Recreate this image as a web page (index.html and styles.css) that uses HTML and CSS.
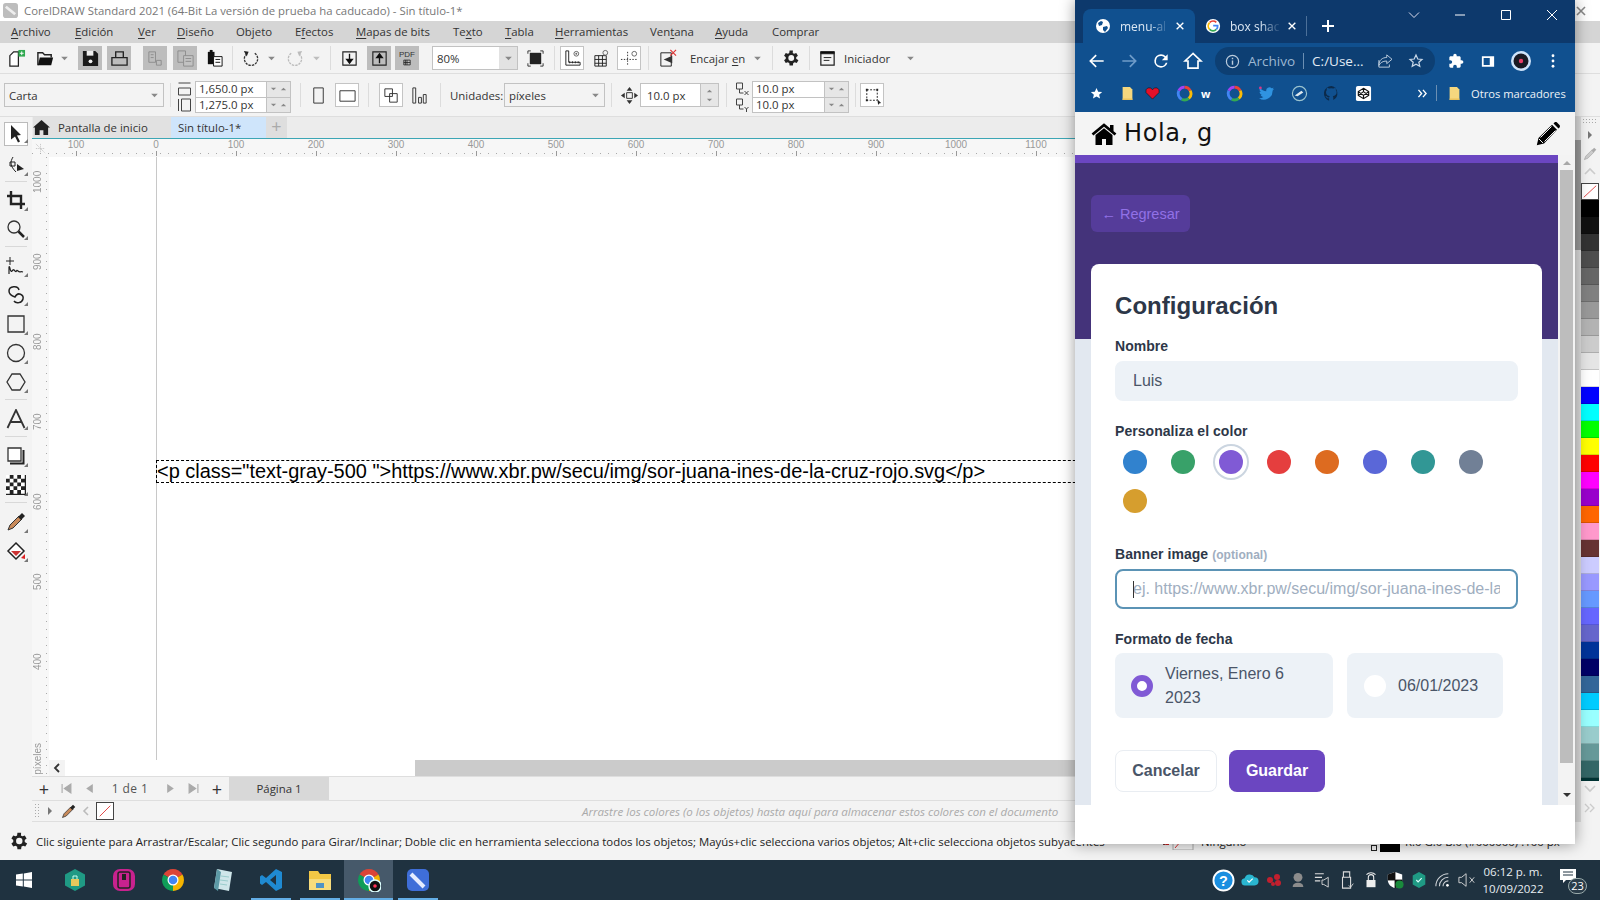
FILE: index.html
```html
<!DOCTYPE html>
<html lang="es">
<head>
<meta charset="utf-8">
<title>CorelDRAW y Chrome</title>
<link rel="stylesheet" href="styles.css">
</head>
<body>
<svg class="defs" aria-hidden="true">
  <symbol id="caret" viewBox="0 0 10 6"><path d="M1 1h8L5 5z" fill="#888"/></symbol>
  <symbol id="upp" viewBox="0 0 10 6"><path d="M1 5h8L5 1z" fill="#888"/></symbol>
  <symbol id="gear" viewBox="0 0 24 24"><path fill="#222" d="M19.4 13c.1-.3.1-.7.1-1s0-.7-.1-1l2.100-1.600-2-3.500-2.500 1c-.5-.4-1.100-.7-1.700-1L15.500 3h-4l-.4 2.900c-.6.3-1.200.6-1.700 1l-2.500-1-2 3.500L7 11c-.1.3-.1.700-.1 1s0 .7.1 1l-2.100 1.600 2 3.500 2.500-1c.5.4 1.100.7 1.700 1l.4 2.900h4l.4-2.900c.6-.3 1.200-.6 1.700-1l2.500 1 2-3.500zM13.500 15.500a3.500 3.500 0 1 1 0-7 3.500 3.500 0 0 1 0 7z" transform="translate(-1.200 0)"/></symbol>
  <symbol id="chrome" viewBox="0 0 24 24"><path fill="#db4437" d="M12 12 2.500 6.500A11 11 0 0 1 21.500 6.500z"/><path fill="#f4b400" d="M12 12 21.500 6.500A11 11 0 0 1 12 23z"/><path fill="#0f9d58" d="M12 12 12 23A11 11 0 0 1 2.500 6.500z"/><circle cx="12" cy="12" r="5.500" fill="#fff"/><circle cx="12" cy="12" r="4.300" fill="#4285f4"/></symbol>
  <symbol id="star" viewBox="0 0 24 24"><path d="M12 3l2.700 6 6.300.6-4.800 4.200 1.500 6.200L12 16.800 6.300 20l1.500-6.200L3 9.600 9.300 9z"/></symbol>
  <symbol id="folderY" viewBox="0 0 16 18"><path fill="#f5d77e" d="M2 1h9l3 3v13H2z"/><path fill="#e9c25d" d="M2 15h12v2H2z"/></symbol>
  <symbol id="ring" viewBox="0 0 24 24"><g fill="none" stroke-width="4"><path stroke="#ea4335" d="M12 3a9 9 0 0 1 8 5"/><path stroke="#fbbc05" d="M20 8a9 9 0 0 1-2 11"/><path stroke="#34a853" d="M18 19a9 9 0 0 1-10 1"/><path stroke="#4285f4" d="M8 20a9 9 0 0 1-4-12"/><path stroke="#a142f4" d="M4 8a9 9 0 0 1 8-5"/></g></symbol>
  <symbol id="x" viewBox="0 0 12 12"><path d="M2 2l8 8M10 2l-8 8" fill="none" stroke="currentColor" stroke-width="1.600"/></symbol>
</svg>

<div class="corel">
  <header class="titlebar">
    <svg class="app-logo" viewBox="0 0 16 16"><rect width="16" height="16" rx="3" fill="#bdbdbd"/><path d="M3 4l10 8" stroke="#eee" stroke-width="3"/></svg>
    <span class="title-text">CorelDRAW Standard 2021 (64-Bit La versión de prueba ha caducado) - Sin título-1*</span>
    <svg class="corel-close" viewBox="0 0 12 12"><use href="#x"/></svg>
  </header>
  <nav class="menubar">
    <span><u>A</u>rchivo</span><span><u>E</u>dición</span><span><u>V</u>er</span><span><u>D</u>iseño</span><span>Ob<u>j</u>eto</span><span>E<u>f</u>ectos</span><span><u>M</u>apas de bits</span><span>Te<u>x</u>to</span><span><u>T</u>abla</span><span><u>H</u>erramientas</span><span>Ven<u>t</u>ana</span><span><u>A</u>yuda</span><span>Comprar</span>
  </nav>

  <div class="toolbar tb1">
    <div class="c"><svg viewBox="0 0 20 20" class="i"><path d="M3 18V7l4-4h5v15z" fill="#fff" stroke="#222" stroke-width="1.300"/><path fill="#2fa84f" d="M12 1h7v7h-7z"/><path d="M15.500 2.500v4M13.500 4.500h4" stroke="#fff"/></svg></div>
    <div class="c ml5"><svg viewBox="0 0 20 20" class="i"><path d="M2 17V4h5l2 2h7v3" fill="none" stroke="#222" stroke-width="1.500"/><path d="M2 17l2-8h14l-2 8z" fill="#111"/></svg></div>
    <div class="c14"><svg class="cr"><use href="#caret"/></svg></div>
    <div class="c on ml7"><svg viewBox="0 0 20 20" class="i"><path d="M2 2h13l3 3v13H2z" fill="#1a1a1a"/><path d="M6 2h7v5H6z" fill="#eee"/><circle cx="10" cy="13" r="2" fill="#eee"/></svg></div>
    <div class="c on ml5"><svg viewBox="0 0 20 20" class="i"><path d="M6 9V3h8v6M2 17v-8h16v8z" fill="none" stroke="#222" stroke-width="1.400"/></svg></div>
    <div class="c on ml12"><svg viewBox="0 0 20 20" class="i"><path d="M3 3h7v11H3zM11 12h5v5h-5z" fill="none" stroke="#8d8d8d"/><path d="M5 6h3M5 9h3" stroke="#8d8d8d"/></svg></div>
    <div class="c on ml6"><svg viewBox="0 0 20 20" class="i"><path d="M2 2h8v12H2z" fill="none" stroke="#8d8d8d"/><path d="M8 7h10v11H8z" fill="#c2c2c2" stroke="#8d8d8d"/><path d="M10 10h6M10 13h6" stroke="#8d8d8d"/></svg></div>
    <div class="c ml5"><svg viewBox="0 0 20 20" class="i"><path d="M3 3h7v13H3z" fill="#111"/><path d="M5 1h3v3H5z" fill="#111"/><path d="M9 8h9v10H9z" fill="#fff" stroke="#111"/><path d="M11 11h5M11 14h5" stroke="#111"/></svg></div>
    <div class="sep ml6"></div>
    <div class="c ml5"><svg viewBox="0 0 20 20" class="i"><path d="M14.500 4.500A7 7 0 1 1 5 6" fill="none" stroke="#333" stroke-width="1.400" stroke-dasharray="2.500 1"/><path d="M3 2l5 1-2 5z" fill="#222"/></svg></div>
    <div class="c14 ml2"><svg class="cr"><use href="#caret"/></svg></div>
    <div class="c ml5"><svg viewBox="0 0 20 20" class="i"><path d="M5.500 4.500A7 7 0 1 0 15 6" fill="none" stroke="#bbb" stroke-width="1.400" stroke-dasharray="2.500 1"/><path d="M17 2l-5 1 2 5z" fill="#bbb"/></svg></div>
    <div class="c14 ml2 dim"><svg class="cr"><use href="#caret"/></svg></div>
    <div class="sep ml7"></div>
    <div class="c ml6"><svg viewBox="0 0 20 20" class="i"><path d="M3 3h14v14H3z" fill="none" stroke="#222" stroke-width="1.200"/><path d="M10 5v9M7 11l3 4 3-4z" stroke="#111" stroke-width="1.400"/></svg></div>
    <div class="c on ml6"><svg viewBox="0 0 20 20" class="i"><path d="M3 3h14v14H3z" fill="none" stroke="#222" stroke-width="1.200"/><path d="M10 15V6M7 9l3-4 3 4z" stroke="#111" stroke-width="1.400"/></svg></div>
    <div class="c on ml4 pdf">PDF<svg viewBox="0 0 10 8" class="pdfi"><path d="M1 1h8v6H1zM3 1v6M1 4h8M5 1v6" fill="none" stroke="#222"/></svg></div>
    <div class="combo zoom ml13"><span>80%</span><b><svg class="cr"><use href="#caret"/></svg></b></div>
    <div class="c ml5"><svg viewBox="0 0 20 20" class="i"><path d="M4 4h12v12H4z" fill="#222"/><path d="M2 5V2h3M15 2h3v3M18 15v3h-3M5 18H2v-3" fill="none" stroke="#333"/></svg></div>
    <div class="sep ml7"></div>
    <div class="c out ml5"><svg viewBox="0 0 20 20" class="i"><path d="M3 2h3v12h12v3H3z" fill="none" stroke="#222"/><path d="M7 15V13M10 15v-2M13 15v-2M16 15v-2" stroke="#222"/><circle cx="14" cy="5" r="2.500" fill="none" stroke="#666"/><circle cx="14" cy="5" r="1" fill="#666"/></svg></div>
    <div class="c ml5"><svg viewBox="0 0 20 20" class="i"><path d="M3 7h12v11H3zM7 7v11M11 7v11M3 11h12M3 15h12" fill="none" stroke="#222"/><circle cx="14" cy="4" r="2.500" fill="none" stroke="#666"/></svg></div>
    <div class="c out ml4"><svg viewBox="0 0 20 20" class="i"><path d="M8 3v15M1 11h17" fill="none" stroke="#333" stroke-dasharray="1.500 1.500"/><circle cx="15" cy="5" r="2.500" fill="none" stroke="#666"/></svg></div>
    <div class="sep ml7"></div>
    <div class="c ml6"><svg viewBox="0 0 20 20" class="i"><path d="M3 4h11v14H3z" fill="none" stroke="#222"/><path d="M6 11l9-4v8z" fill="#333"/><path d="M13 1l6 6M19 1l-6 6" stroke="#d33" stroke-width="1.200"/></svg></div>
    <span class="lbl w54 ml11">Encajar <u>e</u>n</span>
    <div class="c14 ml6"><svg class="cr"><use href="#caret"/></svg></div>
    <div class="sep ml8"></div>
    <div class="c ml6"><svg viewBox="0 0 24 24" class="i20"><use href="#gear"/></svg></div>
    <div class="sep ml6"></div>
    <div class="c w20 ml7"><svg viewBox="0 0 20 20" class="i"><path d="M3 3h14v14H3z" fill="none" stroke="#222" stroke-width="1.300"/><path d="M3 3h14v2H3zM6 9h8M6 12h6" stroke="#222"/></svg></div>
    <span class="lbl w46 ml7">Iniciador</span>
    <div class="c14 ml13"><svg class="cr"><use href="#caret"/></svg></div>
  </div>

  <div class="toolbar tb2">
    <div class="combo carta"><span>Carta</span><b><svg class="cr"><use href="#caret"/></svg></b></div>
    <div class="sep ml6"></div>
    <div class="stack-icons ml6">
      <svg viewBox="0 0 14 14"><path d="M1 1h12M1 6h12v7H1z" fill="none" stroke="#444"/></svg>
      <svg viewBox="0 0 14 14"><path d="M1 1v12M4 1h9v12H4z" fill="none" stroke="#444"/></svg>
    </div>
    <div class="fields ml2 w96">
      <div class="field"><span>1,650.0 px</span><b><svg class="cr"><use href="#caret"/></svg><svg class="cr"><use href="#upp"/></svg></b></div>
      <div class="field"><span>1,275.0 px</span><b><svg class="cr"><use href="#caret"/></svg><svg class="cr"><use href="#upp"/></svg></b></div>
    </div>
    <div class="sep ml9"></div>
    <div class="c ml5"><svg viewBox="0 0 20 20" class="i"><path d="M5 2h10v16H5z" fill="none" stroke="#333"/></svg></div>
    <div class="c out ml5"><svg viewBox="0 0 20 20" class="i"><path d="M2 5h16v11H2z" fill="none" stroke="#333"/></svg></div>
    <div class="sep ml9"></div>
    <div class="c out ml10"><svg viewBox="0 0 20 20" class="i"><path d="M3 3h8v8H3zM8 8h8v9H8z" fill="none" stroke="#333"/></svg></div>
    <div class="c ml4"><svg viewBox="0 0 20 20" class="i"><path d="M3 2h3v16H3zM9 12h3v6H9zM14 9h3v9h-3z" fill="none" stroke="#333"/></svg></div>
    <div class="sep ml9"></div>
    <span class="lbl w51 ml9">Unidades:</span>
    <div class="combo units ml3"><span>píxeles</span><b><svg class="cr"><use href="#caret"/></svg></b></div>
    <div class="sep ml6"></div>
    <div class="c w22 ml6"><svg viewBox="0 0 20 20" class="i"><path d="M10 1l3 4H7zM10 19l-3-4h6zM1 10l4-3v6zM19 10l-4 3V7z" fill="#333"/><path d="M7 7h6v6H7z" fill="none" stroke="#333"/></svg></div>
    <div class="nudge"><span>10.0 px</span><b><svg class="cr"><use href="#upp"/></svg><svg class="cr"><use href="#caret"/></svg></b></div>
    <div class="sep ml7"></div>
    <div class="stack-icons ml8">
      <svg viewBox="0 0 14 14"><path d="M1 1h6v6H1zM4 7v4h4" fill="none" stroke="#444"/><path d="M9 9l4 4M13 9l-4 4" stroke="#444"/></svg>
      <svg viewBox="0 0 14 14"><path d="M1 1h6v6H1zM4 7v4h4" fill="none" stroke="#444"/><path d="M9 9l2 2 2-2M11 11v3" fill="none" stroke="#444"/></svg>
    </div>
    <div class="fields ml1 w97">
      <div class="field"><span>10.0 px</span><b><svg class="cr"><use href="#caret"/></svg><svg class="cr"><use href="#upp"/></svg></b></div>
      <div class="field"><span>10.0 px</span><b><svg class="cr"><use href="#caret"/></svg><svg class="cr"><use href="#upp"/></svg></b></div>
    </div>
    <div class="sep ml6"></div>
    <div class="c out ml4"><svg viewBox="0 0 20 20" class="i"><path d="M4 4h11v11H4z" fill="none" stroke="#222" stroke-dasharray="2 1.500"/><path d="M3 3h2v2H3zM14 3h2v2h-2zM3 14h2v2H3zM15 14l4 4-2 .5-1 1.500z" fill="#222"/></svg></div>
  </div>

  <div class="workspace">
    <aside class="tools">
      <div class="tool sel"><svg viewBox="0 0 20 20"><path d="M5 1l10 10-4 .5 3 6-2 1-3-6-4 3z" fill="#222"/></svg></div>
      <div class="tool tall"><svg viewBox="0 0 20 20"><path d="M7 2c-3 5-3 9 3 15" fill="none" stroke="#222"/><path d="M4 7h5v4H4z" fill="none" stroke="#222"/><path d="M11 9l7 5-7 2z" fill="#222"/></svg></div>
      <hr class="hr-s">
      <div class="tool"><svg viewBox="0 0 20 20"><path d="M1 6h14v13M19 14H5V1" fill="none" stroke="#222" stroke-width="2.400"/></svg></div>
      <div class="tool"><svg viewBox="0 0 20 20"><circle cx="8" cy="8" r="6" fill="none" stroke="#333" stroke-width="1.300"/><path d="M12.500 12.500L18 18" stroke="#222" stroke-width="2.500"/></svg></div>
      <hr>
      <div class="tool"><svg viewBox="0 0 20 20"><path d="M4 1v8M0 5h8" stroke="#222"/><path d="M3 18v-7c1-2 1 6 3 4s1-2 3 0 1-2 3 0 2 0 5 1" fill="none" stroke="#222" stroke-width="1.200"/></svg></div>
      <div class="tool"><svg viewBox="0 0 20 20"><path d="M13 5C12 0 3 1 3 6c0 3 3 5 6 6 3-6 9-2 8 2s-7 5-9 2" fill="none" stroke="#222" stroke-width="1.500"/></svg></div>
      <div class="tool"><svg viewBox="0 0 20 20"><path d="M2 2h16v16H2z" fill="none" stroke="#333" stroke-width="1.300"/></svg></div>
      <div class="tool"><svg viewBox="0 0 20 20"><circle cx="10" cy="10" r="8.500" fill="none" stroke="#333" stroke-width="1.300"/></svg></div>
      <div class="tool"><svg viewBox="0 0 20 20"><path d="M6 2h8l5 8-5 8H6l-5-8z" fill="none" stroke="#333" stroke-width="1.300"/></svg></div>
      <hr>
      <div class="tool"><svg viewBox="0 0 20 20"><path d="M1.500 19L10 1l8.500 18M5 13h10" fill="none" stroke="#333" stroke-width="1.800"/></svg></div>
      <hr>
      <div class="tool"><svg viewBox="0 0 20 20"><path d="M2 2h13v13H2z" fill="#fff" stroke="#333" stroke-width="1.300"/><path d="M17.500 4v13.500H4" fill="none" stroke="#222" stroke-width="2"/></svg></div>
      <div class="tool"><svg viewBox="0 0 16 16"><rect width="16" height="16" fill="#222"/><path d="M0 0h3v3H0zM6 0h3v3H6zM12 0h3v3h-3zM3 3h3v3H3zM9 3h3v3H9zM0 6h3v3H0zM6 6h3v3H6zM12 6h3v3h-3zM3 9h3v3H3zM9 9h3v3H9zM0 12h3v3H0zM6 12h3v3H6zM12 12h3v3h-3z" fill="#fff"/></svg></div>
      <hr>
      <div class="tool"><svg viewBox="0 0 20 20"><path d="M2 18l2-5 9-9 3 3-9 9z" fill="#c98a5a" stroke="#333"/><path d="M12 5l4-4 3 3-4 4z" fill="#222"/></svg></div>
      <div class="tool"><svg viewBox="0 0 20 20"><path d="M10 2l8 8-8 8-8-8z" fill="#fff" stroke="#222" stroke-width="1.500"/><path d="M5 10h10l-5 5z" fill="#c33"/><path d="M15 17l4-4v5z" fill="#d22"/></svg></div>
    </aside>

    <section class="doc">
      <div class="doc-tabs">
        <div class="home-tab">
          <svg viewBox="0 0 18 18"><path d="M9 1 0 9h2v8h5v-5h4v5h5V9h2z" fill="#222"/></svg>
          <span>Pantalla de inicio</span>
        </div>
        <div class="doc-tab">Sin título-1*</div>
        <div class="add-tab">+</div>
      </div>
      <div class="h-ruler">
        <span class="ruler-corner"><svg viewBox="0 0 12 12"><path d="M1 1l10 10M1 6h10M6 1v10" stroke="#bbb" stroke-dasharray="1 1" fill="none"/></svg></span>
        <div class="ruler-labels"><span>100</span><span>0</span><span>100</span><span>200</span><span>300</span><span>400</span><span>500</span><span>600</span><span>700</span><span>800</span><span>900</span><span>1000</span><span>1100</span></div>
      </div>
      <div class="canvas-row">
        <div class="v-ruler">
          <span>1000</span><span>900</span><span>800</span><span>700</span><span>600</span><span>500</span><span>400</span>
          <em>píxeles</em>
        </div>
        <div class="canvas-col">
          <div class="canvas">
            <div class="page-edge">
              <div class="text-frame">&lt;p class="text-gray-500 "&gt;https://www.xbr.pw/secu/img/sor-juana-ines-de-la-cruz-rojo.svg&lt;/p&gt;</div>
            </div>
          </div>
          <div class="scroll-row">
            <span class="scroll-left"><svg viewBox="0 0 8 10"><path d="M6 1L2 5l4 4" fill="none" stroke="#333" stroke-width="1.800"/></svg></span>
            <span class="scroll-thumb"></span>
          </div>
        </div>
      </div>
      <div class="page-row">
        <span class="pg-plus">+</span>
        <svg class="pg" viewBox="0 0 10 10"><path d="M1 1v8M9 1v8L3 5z" fill="#aaa" stroke="#aaa"/></svg>
        <svg class="pg" viewBox="0 0 10 10"><path d="M8 1v8L2 5z" fill="#aaa"/></svg>
        <span class="pg-count">1 de 1</span>
        <svg class="pg" viewBox="0 0 10 10"><path d="M2 1v8l6-4z" fill="#aaa"/></svg>
        <svg class="pg" viewBox="0 0 10 10"><path d="M9 1v8M1 1v8l6-4z" fill="#aaa" stroke="#aaa"/></svg>
        <span class="pg-plus">+</span>
        <span class="pg-tab">Página 1</span>
      </div>
      <div class="color-row">
        <span class="dots"></span>
        <svg class="cr-r" viewBox="0 0 6 10"><path d="M1 1v8l4-4z" fill="#777"/></svg>
        <svg class="cr-pip" viewBox="0 0 20 20"><path d="M2 18l2-5 9-9 3 3-9 9z" fill="#c98a5a" stroke="#333"/><path d="M12 5l4-4 3 3-4 4z" fill="#222"/></svg>
        <svg class="cr-l" viewBox="0 0 8 10"><path d="M6 1L2 5l4 4" fill="none" stroke="#bbb" stroke-width="1.600"/></svg>
        <span class="none-swatch"><svg viewBox="0 0 18 18"><path d="M3 15L15 3" stroke="#d33"/></svg></span>
        <span class="color-hint">Arrastre los colores (o los objetos) hasta aquí para almacenar estos colores con el documento</span>
      </div>
    </section>

    <aside class="palette-col">
      <div class="side-scroll"><span></span></div>
      <div class="palette">
        <span class="dots-h"></span>
        <svg class="pal-arrow" viewBox="0 0 6 10"><path d="M1 1v8l4-4z" fill="#777"/></svg>
        <svg class="pal-pip" viewBox="0 0 20 20"><path d="M2 18l2-5 9-9 3 3-9 9z" fill="#ccc" stroke="#aaa"/><path d="M12 5l4-4 3 3-4 4z" fill="#aaa"/></svg>
        <svg class="pal-chev" viewBox="0 0 14 8"><path d="M2 7l5-5 5 5" fill="none" stroke="#ccc" stroke-width="1.600"/></svg>
        <div class="swatch sw-none"><svg viewBox="0 0 18 17"><path d="M2 15L16 2" stroke="#d33"/></svg></div>
        <div class="swatch s1"></div><div class="swatch s2"></div><div class="swatch s3"></div><div class="swatch s4"></div><div class="swatch s5"></div><div class="swatch s6"></div><div class="swatch s7"></div><div class="swatch s8"></div><div class="swatch s9"></div><div class="swatch s10"></div><div class="swatch s11"></div><div class="swatch s12"></div><div class="swatch s13"></div><div class="swatch s14"></div><div class="swatch s15"></div><div class="swatch s16"></div><div class="swatch s17"></div><div class="swatch s18"></div><div class="swatch s19"></div><div class="swatch s20"></div><div class="swatch s21"></div><div class="swatch s22"></div><div class="swatch s23"></div><div class="swatch s24"></div><div class="swatch s25"></div><div class="swatch s26"></div><div class="swatch s27"></div><div class="swatch s28"></div><div class="swatch s29"></div><div class="swatch s30"></div><div class="swatch s31"></div><div class="swatch s32"></div><div class="swatch s33"></div><div class="swatch s34"></div>
        <div class="swatch-end"></div>
        <svg class="pal-chev down" viewBox="0 0 14 8"><path d="M2 1l5 5 5-5" fill="none" stroke="#ccc" stroke-width="1.600"/></svg>
        <svg class="pal-chev more" viewBox="0 0 14 10"><path d="M2 1l4 4-4 4M7 1l4 4-4 4" fill="none" stroke="#ccc" stroke-width="1.300"/></svg>
      </div>
    </aside>
  </div>

  <footer class="statusbar">
    <svg class="st-gear" viewBox="0 0 24 24"><use href="#gear"/></svg>
    <span class="st-msg">Clic siguiente para Arrastrar/Escalar; Clic segundo para Girar/Inclinar; Doble clic en herramienta selecciona todos los objetos; Mayús+clic selecciona varios objetos; Alt+clic selecciona objetos subyacentes</span>
    <svg class="st-fill" viewBox="0 0 38 18"><path d="M2 8l5-5 5 5-5 5z" fill="none" stroke="#733"/><path d="M12 4v9L8 13z" fill="#c22"/><path d="M16 0h20v18H16z" fill="none" stroke="#aaa"/><path d="M18 16L30 2" stroke="#d33"/></svg>
    <span class="st-none">Ninguno</span>
    <span class="st-small"></span>
    <span class="st-black"></span>
    <span class="st-rgb">R:0 G:0 B:0 (#000000) .100 px</span>
  </footer>
</div>

<footer class="taskbar">
  <div class="tk-start"><svg viewBox="0 0 16 16"><path d="M0 2.500 6.800 1.500v6H0zM7.800 1.400 16 0v7.500H7.800zM0 8.500h6.800v6L0 13.500zM7.800 8.500H16V16l-8.200-1.400z" fill="#fff"/></svg></div>
  <div class="tk-app first"><svg viewBox="0 0 24 24"><path d="M12 1l10 5.500v11L12 23 2 17.500v-11z" fill="#1f9a84"/><path d="M8 11h8v7H8z" fill="#e8c85c"/><path d="M10 11V8h4v3" fill="none" stroke="#cfe"/></svg></div>
  <div class="tk-app"><svg viewBox="0 0 24 24"><rect x="1" y="1" width="22" height="22" rx="7" fill="#c8228e"/><rect x="6" y="4" width="12" height="16" rx="2" fill="none" stroke="#222" stroke-width="1.500"/><path d="M10 6h4v6h-4z" fill="#222"/></svg></div>
  <div class="tk-app"><svg viewBox="0 0 24 24"><use href="#chrome"/></svg></div>
  <div class="tk-app"><svg viewBox="0 0 24 24"><path d="M7 1l15 3-3 19-15-3z" fill="#cfe6ea"/><path d="M7 1L4 20l4 3 3-19z" fill="#5d9aa6"/><path d="M11 8l8 1M10 12l8 1M10 16l7 1" stroke="#9cc"/></svg></div>
  <div class="tk-app run"><svg viewBox="0 0 24 24"><path d="M17 1l6 3v16l-6 3L7 14l-4 3-2-1.500V8.500L3 7l4 3z" fill="#1f8ad2"/><path d="M17 7l-6 5 6 5z" fill="#1f3240"/></svg></div>
  <div class="tk-app run"><svg viewBox="0 0 24 24"><path d="M1 3h9l2 3h11v16H1z" fill="#f3c845"/><path d="M1 11h22v11H1z" fill="#f7dc7c"/><path d="M8 15h8v5H8z" fill="#4f93c5"/></svg></div>
  <div class="tk-app run active"><svg viewBox="0 0 24 24"><use href="#chrome"/><circle cx="18" cy="18" r="6" fill="#111" stroke="#dff" stroke-width="1.500"/><circle cx="18" cy="18" r="1.800" fill="#f35"/></svg></div>
  <div class="tk-app run"><svg viewBox="0 0 24 24"><rect x="1" y="1" width="22" height="22" rx="5" fill="#3f6ed8"/><path d="M5 6l13 13" stroke="#e6ecff" stroke-width="4"/></svg></div>

  <div class="tray">
    <span class="tr"><svg viewBox="0 0 24 24" class="t22"><circle cx="12" cy="12" r="10.500" fill="#1b8fe0" stroke="#fff" stroke-width="2"/><text x="12" y="17.500" text-anchor="middle" class="qm">?</text></svg></span>
    <span class="tr ml3"><svg viewBox="0 0 20 14" class="t18"><path d="M5 13a4 4 0 0 1-1-8 6 6 0 0 1 11-1 4.500 4.500 0 0 1 0 9z" fill="#2ab6d0"/><path d="M7 7.500l2 2 4-4" fill="none" stroke="#fff" stroke-width="1.300"/></svg></span>
    <span class="tr"><svg viewBox="0 0 18 14" class="t18"><circle cx="5" cy="7" r="3" fill="#c21f2e"/><circle cx="12" cy="4" r="3" fill="#c21f2e"/><circle cx="13" cy="10" r="3" fill="#c21f2e"/><circle cx="8" cy="11" r="2" fill="#c21f2e"/></svg></span>
    <span class="tr"><svg viewBox="0 0 16 18" class="t16"><circle cx="8" cy="6" r="5" fill="#8c8c8c"/><path d="M2 17c0-4 3-5 6-5s6 1 6 5z" fill="#8c8c8c"/></svg></span>
    <span class="tr"><svg viewBox="0 0 18 18" class="t16"><path d="M1 2h10M1 6h8M1 10h6" stroke="#ddd" stroke-width="1.300"/><path d="M11 9l5-3v11l-5-3h-2V9z" fill="none" stroke="#ddd"/></svg></span>
    <span class="tr ml1"><svg viewBox="0 0 14 20" class="t18"><path d="M3 1h7v6H3zM2 7h9v12H2z" fill="none" stroke="#ddd" stroke-width="1.200"/><path d="M9 16l2 2 3-4" fill="none" stroke="#ddd"/></svg></span>
    <span class="tr"><svg viewBox="0 0 14 20" class="t18"><path d="M2 10h10v8H2z" fill="#eee"/><path d="M4 10V7a3 3 0 0 1 6 0v3M2 4a7 7 0 0 1 10 0" fill="none" stroke="#eee" stroke-width="1.200"/></svg></span>
    <span class="tr"><svg viewBox="0 0 20 20" class="t18"><path d="M10 1l8 3v6c0 5-4 8-8 9-4-1-8-4-8-9V4z" fill="#fff"/><path d="M10 1v18M2 10h16" stroke="#222"/><path d="M2 4l8-3v9H2zM10 10h8c0 5-4 8-8 9z" fill="#111"/><circle cx="15" cy="15" r="4.500" fill="#1a8a3c"/></svg></span>
    <span class="tr"><svg viewBox="0 0 16 20" class="t18"><path d="M8 1l7 4v10l-7 4-7-4V5z" fill="#1f9a84"/><path d="M5 10l2 2 4-4" fill="none" stroke="#dff" stroke-width="1.300"/></svg></span>
    <span class="tr"><svg viewBox="0 0 18 16" class="t16"><path d="M1 15A14 14 0 0 1 15 1M5 15A10 10 0 0 1 15 5M9 15a6 6 0 0 1 6-6" fill="none" stroke="#cfd4d8" stroke-width="1.200"/><circle cx="14" cy="14" r="1.500" fill="#fff"/></svg></span>
    <span class="tr"><svg viewBox="0 0 20 16" class="t18"><path d="M1 5h3l5-4v14l-5-4H1z" fill="none" stroke="#ddd"/><path d="M13 5l5 6M18 5l-5 6" stroke="#ddd"/></svg></span>
    <span class="clock"><span>06:12 p. m.</span><span>10/09/2022</span></span>
    <span class="notif"><svg viewBox="0 0 16 14"><path d="M0 0h16v11H6l-3 3v-3H0z" fill="#fff"/><path d="M3 3h10M3 6h10" stroke="#1f3240"/></svg><i>23</i></span>
  </div>
</footer>

<main class="browser">
  <div class="tabstrip">
    <div class="tab current">
      <svg viewBox="0 0 16 16" class="fav"><circle cx="8" cy="8" r="7" fill="#fff"/><path d="M3 5l3-2 2 1-1 3-3 1zM8 9l4-1 1 2-3 4-2-2z" fill="#10508f"/></svg>
      <span class="tab-text">menu-al</span>
      <svg viewBox="0 0 12 12" class="tab-x"><use href="#x"/></svg>
    </div>
    <div class="tab other">
      <svg viewBox="0 0 18 18" class="fav"><circle cx="9" cy="9" r="8" fill="#fff"/><path d="M5.300 5A5.500 5.500 0 0 1 12.700 4.900" stroke="#ea4335" stroke-width="2" fill="none"/><path d="M5.200 5.200a5.500 5.500 0 0 0 0 7.600" stroke="#fbbc05" stroke-width="2" fill="none"/><path d="M5.200 12.800a5.500 5.500 0 0 0 7.600.1" stroke="#34a853" stroke-width="2" fill="none"/><path d="M9.200 8.500h5a5.500 5.500 0 0 1-1.400 4.400" stroke="#4285f4" stroke-width="2" fill="none"/></svg>
      <span class="tab-text">box shac</span>
      <svg viewBox="0 0 12 12" class="tab-x"><use href="#x"/></svg>
    </div>
    <span class="tab-sep"></span>
    <svg viewBox="0 0 14 14" class="tab-new"><path d="M7 1v12M1 7h12" stroke="#fff" stroke-width="2"/></svg>
    <div class="win-ctrl">
      <svg viewBox="0 0 12 12"><path d="M1 3.500l5 5 5-5" fill="none" stroke="#dde" stroke-width="1"/></svg>
      <svg viewBox="0 0 12 12"><path d="M1 6h10" stroke="#fff" stroke-width="1"/></svg>
      <svg viewBox="0 0 12 12"><path d="M1.500 1.500h9v9h-9z" fill="none" stroke="#fff"/></svg>
      <svg viewBox="0 0 12 12"><path d="M1 1l10 10M11 1L1 11" stroke="#fff" stroke-width="1"/></svg>
    </div>
  </div>
  <div class="navbar">
    <svg viewBox="0 0 24 24" class="nv"><path d="M20 12H5M11 5l-7 7 7 7" fill="none" stroke="#fff" stroke-width="2"/></svg>
    <svg viewBox="0 0 24 24" class="nv"><path d="M4 12h15M13 5l7 7-7 7" fill="none" stroke="#6f9cc9" stroke-width="2"/></svg>
    <svg viewBox="0 0 24 24" class="nv"><path fill="#fff" d="M17.650 6.350A7.950 7.950 0 0 0 12 4a8 8 0 1 0 7.730 10h-2.080A6 6 0 1 1 12 6c1.660 0 3.140.69 4.220 1.780L13 11h7V4z"/></svg>
    <svg viewBox="0 0 24 24" class="nv"><path d="M12 3 2.500 12H6v8.500h12V12h3.500z" fill="none" stroke="#fff" stroke-width="2"/></svg>
    <div class="omnibox">
      <svg viewBox="0 0 16 16" class="om-i"><circle cx="8" cy="8" r="6.500" fill="none" stroke="#bcd" stroke-width="1.300"/><path d="M8 7v4.500M8 4v1.600" stroke="#bcd" stroke-width="1.500"/></svg>
      <span class="om-scheme">Archivo</span>
      <span class="om-sep"></span>
      <span class="om-url">C:/Use...</span>
      <svg viewBox="0 0 18 16" class="om-share"><path d="M11 1l6 5-6 5V8C6 8 4 10 2 13c0-6 4-9 9-9zM2 7v8h12v-3" fill="none" stroke="#bcd" stroke-width="1.100"/></svg>
      <svg viewBox="0 0 24 24" class="om-star"><use href="#star"/></svg>
    </div>
    <svg viewBox="0 0 24 24" class="nv ext"><path fill="#fff" d="M20.500 11H19V7c0-1.100-.9-2-2-2h-4V3.500C13 2.120 11.880 1 10.500 1S8 2.120 8 3.500V5H4c-1.100 0-2 .9-2 2v3.800h1.500c1.490 0 2.700 1.210 2.700 2.700S4.990 16.200 3.500 16.200H2V20c0 1.100.9 2 2 2h3.800v-1.500c0-1.490 1.210-2.700 2.700-2.700s2.700 1.210 2.700 2.700V22H17c1.100 0 2-.9 2-2v-4h1.500c1.380 0 2.500-1.120 2.500-2.500S21.880 11 20.500 11z"/></svg>
    <svg viewBox="0 0 16 14" class="nv panel"><path d="M1 1h14v12H1z" fill="#fff"/><path d="M3 3h7v8H3z" fill="#10508f"/></svg>
    <span class="avatar"><svg viewBox="0 0 22 22"><circle cx="11" cy="11" r="10" fill="#cfe4fb"/><circle cx="11" cy="11" r="7.500" fill="#1a1a24"/><circle cx="11" cy="11" r="2.200" fill="#e83e6a"/></svg></span>
    <svg viewBox="0 0 4 16" class="nv dots3"><circle cx="2" cy="2" r="1.600" fill="#fff"/><circle cx="2" cy="8" r="1.600" fill="#fff"/><circle cx="2" cy="14" r="1.600" fill="#fff"/></svg>
  </div>
  <div class="bookmarks">
    <svg viewBox="0 0 24 24" class="bm bm-star"><use href="#star"/></svg>
    <svg viewBox="0 0 16 18" class="bm bm-fold1"><use href="#folderY"/></svg>
    <svg viewBox="0 0 16 14" class="bm bm-heart"><path d="M8 13 1 6V3l2-2h3l2 2 2-2h3l2 2v3z" fill="#e3102a" stroke="#111" stroke-width=".6"/></svg>
    <svg viewBox="0 0 24 24" class="bm bm-ring1"><use href="#ring"/></svg>
    <span class="bm-w">w</span>
    <svg viewBox="0 0 24 24" class="bm bm-ring2"><use href="#ring"/></svg>
    <svg viewBox="0 0 18 16" class="bm bm-tw"><path d="M17 3c-.6.3-1.200.4-1.900.5.700-.4 1.200-1 1.400-1.800-.6.4-1.300.7-2.100.8A3.300 3.300 0 0 0 8.800 5.500C6.100 5.400 3.700 4.100 2.100 2.100c-.9 1.500-.4 3.400 1 4.400-.5 0-1-.2-1.500-.4 0 1.600 1.100 2.900 2.600 3.200-.5.100-1 .2-1.500.1.400 1.300 1.600 2.200 3 2.300A6.600 6.600 0 0 1 1 13.100 9.400 9.400 0 0 0 15.500 5z" fill="#2f93e0"/><circle cx="2.500" cy="2" r="1.500" fill="#d43a8a"/></svg>
    <svg viewBox="0 0 18 18" class="bm bm-wh"><circle cx="9" cy="9" r="7.500" fill="none" stroke="#9bc3cf" stroke-width="1.200"/><path d="M4 11l7-5 2 2-6 4z" fill="#dfe9ef"/></svg>
    <svg viewBox="0 0 18 18" class="bm bm-gh"><path d="M9 1a8 8 0 0 0-2.500 15.600V14C4 14.500 3.500 13 3.500 13c-.5-1-1-1.200-1-1.200 1-.5 1.500.5 1.500.5.800 1.300 2.200 1 2.700.7 0-.6.300-1 .5-1.200-2-.2-4-1-4-4.300 0-1 .3-1.700.9-2.300-.1-.2-.4-1.100.1-2.300 0 0 .7-.2 2.400.9a8 8 0 0 1 4.400 0c1.700-1.100 2.400-.9 2.400-.9.500 1.200.2 2.100.1 2.300.6.600.9 1.300.9 2.300 0 3.300-2 4-4 4.300.3.300.5.800.5 1.500v2.600A8 8 0 0 0 9 1z" fill="#0c2a4a"/></svg>
    <svg viewBox="0 0 18 18" class="bm bm-cp"><rect x="1" y="1" width="16" height="16" rx="2" fill="#fff"/><path d="M9 3.500l5.500 3.500v4L9 14.500 3.500 11V7zM9 3.500V7M9 11v3.500M3.500 7L9 11l5.500-4M3.500 11 9 7l5.500 4" fill="none" stroke="#111" stroke-width="1.200"/></svg>
    <svg viewBox="0 0 12 10" class="bm bm-more"><path d="M1.500 1l3.500 4-3.500 4M6.500 1l3.500 4-3.500 4" fill="none" stroke="#fff" stroke-width="1.500"/></svg>
    <span class="bm-sep"></span>
    <svg viewBox="0 0 16 18" class="bm bm-fold2"><use href="#folderY"/></svg>
    <span class="bm-other">Otros marcadores</span>
  </div>

  <div class="site-head">
    <svg viewBox="0 0 26 22" class="site-home"><path d="M1.500 11.500 13 2l11.500 9.500" fill="none" stroke="#000" stroke-width="2.800"/><path d="M19 2h3.500v6H19zM4.500 12 13 5.200l8.500 6.800v10H15v-6h-4v6H4.500z" fill="#000"/></svg>
    <span class="hola">Hola, g</span>
    <svg viewBox="0 0 24 24" class="site-pen"><path d="M0.800 23.200 2.500 16 16 2.800l5 5L8 21.500z" fill="#000"/><path d="M17.500 1.500l1-1c.8-.6 1.800-.6 2.500 0L23.500 3c.6.7.6 1.700 0 2.500l-1 1z" fill="#000"/><path d="M4.500 15.500 15.500 4.500M8.500 19.500 19.500 8.500" stroke="#f5f5f5" stroke-width="1"/><path d="M3 17l4 4" stroke="#f5f5f5" stroke-width="1"/></svg>
  </div>

  <div class="viewport">
    <div class="content">
      <button class="back">← Regresar</button>
      <section class="card">
        <h1>Configuración</h1>
        <label class="flabel">Nombre</label>
        <input class="finput" value="Luis">
        <label class="flabel mt-color">Personaliza el color</label>
        <div class="colors">
          <span class="dot d-blue"></span><span class="dot d-green"></span><span class="dot d-purple picked"></span><span class="dot d-red"></span><span class="dot d-orange"></span><span class="dot d-indigo"></span><span class="dot d-teal"></span><span class="dot d-gray"></span><span class="dot d-yellow"></span>
        </div>
        <label class="flabel mt-banner">Banner image <small>(optional)</small></label>
        <div class="focus-wrap">
          <input class="finput focused" placeholder="ej. https://www.xbr.pw/secu/img/sor-juana-ines-de-la-cruz-rojo.svg">
          <span class="text-caret"></span>
        </div>
        <label class="flabel mt-date">Formato de fecha</label>
        <div class="date-opts">
          <div class="opt opt-long"><span class="radio on"></span><span class="opt-text">Viernes, Enero 6 2023</span></div>
          <div class="opt opt-short"><span class="radio"></span><span class="opt-text">06/01/2023</span></div>
        </div>
        <div class="actions">
          <button class="btn cancel">Cancelar</button>
          <button class="btn save">Guardar</button>
        </div>
      </section>
    </div>
    <div class="scrollbar">
      <svg viewBox="0 0 10 6"><path d="M1 5h8L5 1z" fill="#a8a8a8"/></svg>
      <span class="sb-thumb"></span>
      <svg viewBox="0 0 10 6" class="sb-down"><path d="M1 1h8L5 5z" fill="#333"/></svg>
    </div>
  </div>
  <div class="window-foot"></div>
</main>
</body>
</html>
```

FILE: styles.css
```css
* { box-sizing: border-box; }
html, body { margin: 0; padding: 0; }
body { width: 1600px; height: 900px; overflow: hidden; position: relative; font-family: "Open Sans", "Noto Sans", sans-serif; background: #f3f3f3; }
.defs { display: none; }
u { text-decoration: underline; text-underline-offset: 2px; text-decoration-thickness: 1px; }

/* margins */
.ml1 { margin-left: 1px; } .ml2 { margin-left: 2px; } .ml3 { margin-left: 3px; } .ml4 { margin-left: 4px; } .ml5 { margin-left: 5px; } .ml6 { margin-left: 6px; } .ml7 { margin-left: 7px; } .ml8 { margin-left: 8px; } .ml9 { margin-left: 9px; } .ml10 { margin-left: 10px; } .ml11 { margin-left: 11px; } .ml12 { margin-left: 12px; } .ml13 { margin-left: 13px; } .ml14 { margin-left: 14px; }

/* Corel */
.corel { height: 860px; display: flex; flex-direction: column; }
.titlebar { height: 21px; background: #fff; display: flex; align-items: center; padding: 0 13px 0 3px; flex: none; }
.app-logo { width: 15px; height: 15px; }
.title-text { margin-left: 6px; font-size: 11.35px; color: #777; white-space: nowrap; }
.corel-close { width: 12px; height: 12px; margin-left: auto; color: #888; }
.menubar { height: 22px; background: #d5d5d5; flex: none; display: grid; grid-template-columns: 64px 63px 39px 59px 59px 61px 97px 52px 50px 95px 65px 57px 60px; padding: 0 0 2px 11px; align-items: center; font-size: 11.4px; color: #333; white-space: nowrap; }

.toolbar { display: flex; align-items: center; padding-left: 4px; background: #f3f3f3; flex: none; border-bottom: 1px solid #dedede; }
.tb1 { height: 31px; }
.tb2 { height: 43px; }
.c { flex: none; width: 24px; height: 24px; display: flex; align-items: center; justify-content: center; }
.c14 { flex: none; width: 14px; height: 24px; display: flex; align-items: center; justify-content: center; }
.w20 { width: 20px; } .w22 { width: 22px; }
.on { background: #bdbdbd; }
.out { background: #fff; outline: 1px solid #c4c4c4; outline-offset: -1px; }
.i { width: 19px; height: 19px; }
.i20 { width: 20px; height: 20px; }
.cr { width: 9px; height: 5px; display: block; }
.dim { opacity: .5; }
.sep { flex: none; width: 1px; height: 24px; background: #dcdcdc; }
.pdf { flex-direction: column; font-size: 8px; line-height: 9px; color: #333; font-family: "Liberation Sans", sans-serif; }
.pdfi { width: 8px; height: 7px; }
.lbl { flex: none; font-size: 11.4px; color: #333; white-space: nowrap; }
.w46 { width: 46px; } .w51 { width: 51px; } .w54 { width: 54px; }

.combo { flex: none; height: 24px; display: flex; align-items: center; font-size: 11.4px; color: #333; border: 1px solid #c2c2c2; background: #fff; }
.combo span { flex: 1; padding-left: 4px; }
.combo b { width: 18px; align-self: stretch; display: flex; align-items: center; justify-content: center; background: #e2e2e2; }
.zoom { width: 86px; }
.carta, .units { background: #f3f3f3; }
.carta b, .units b { background: transparent; }
.carta { width: 160px; }
.units { width: 101px; }

.stack-icons { flex: none; width: 16px; display: flex; flex-direction: column; gap: 2px; margin-top: 3px; }
.stack-icons svg { width: 15px; height: 14px; display: block; }
.fields { flex: none; display: flex; flex-direction: column; margin-top: 3px; }
.w96 { width: 96px; } .w97 { width: 97px; }
.field { height: 16px; display: flex; font-size: 11.4px; color: #333; border: 1px solid #c2c2c2; background: #fff; margin-top: -1px; }
.field:first-child { margin-top: 0; height: 17px; }
.field span { flex: 1; padding-left: 3px; line-height: 14px; }
.field b { width: 24px; background: #e6e6e6; display: flex; align-items: center; justify-content: center; gap: 3px; border-left: 1px solid #c2c2c2; }
.field .cr { width: 7px; height: 4px; }
.nudge { flex: none; width: 79px; height: 24px; display: flex; align-items: center; font-size: 11.4px; color: #333; border: 1px solid #c2c2c2; background: #fff; }
.nudge span { flex: 1; padding-left: 6px; }
.nudge b { width: 18px; align-self: stretch; background: #e6e6e6; display: flex; flex-direction: column; align-items: center; justify-content: center; gap: 5px; border-left: 1px solid #c2c2c2; }
.nudge .cr { width: 7px; height: 4px; }

.workspace { flex: 1; min-height: 0; display: grid; grid-template-columns: 32px 1fr 25px; grid-template-rows: minmax(0, 1fr); }
.tools { background: #f3f3f3; display: flex; flex-direction: column; align-items: center; padding-top: 5px; }
.tool { flex: none; width: 24px; height: 29px; display: flex; align-items: center; justify-content: center; position: relative; }
.tool svg { width: 20px; height: 20px; }
.tool::after { content: ""; position: absolute; right: 0; bottom: 3px; border: 2.5px solid transparent; border-right-color: #777; border-bottom-color: #777; }
.tool.sel { height: 24px; margin-bottom: 4px; background: #fff; outline: 1px solid #bbb; outline-offset: -1px; }
.tools hr { width: 22px; margin: 3px 0 4px; border: 0; border-top: 1px solid #d8d8d8; flex: none; }
.tools hr.hr-s { margin: 2px 0 3px; }

.doc { min-width: 0; min-height: 0; display: flex; flex-direction: column; background: #f3f3f3; }
.doc-tabs { height: 22px; flex: none; display: flex; background: #ececec; border-bottom: 1px solid #3ca6b5; }
.home-tab { width: 138px; margin-left: 1px; display: flex; align-items: center; gap: 8px; background: #e1e1e1; font-size: 11.4px; color: #333; white-space: nowrap; padding-bottom: 1px; }
.home-tab svg { width: 17px; height: 17px; }
.doc-tab { width: 95px; background: #cfe5fb; font-size: 11.4px; color: #333; padding: 3px 0 0 7px; white-space: nowrap; }
.add-tab { width: 21px; background: #dedede; color: #aaa; font-size: 18px; line-height: 19px; text-align: center; }
.h-ruler { height: 18px; flex: none; display: flex; background: #f7f7f7; overflow: hidden; background-image: repeating-linear-gradient(to right, #aaa 0 1px, transparent 1px 8px); background-size: 100% 1px; background-repeat: no-repeat; background-position: 0 14px; }
.ruler-corner { width: 17px; flex: none; display: flex; justify-content: center; padding-top: 4px; }
.ruler-corner svg { width: 11px; height: 11px; }
.ruler-labels { display: flex; margin-left: -13px; flex: none; }
.ruler-labels span { width: 80px; flex: none; font-family: "Liberation Sans", sans-serif; font-size: 10px; line-height: 12px; color: #999; text-align: center; height: 18px; background: linear-gradient(#999, #999) center 12px / 1px 5px no-repeat; }
.canvas-row { flex: 1; min-height: 0; display: flex; }
.v-ruler { width: 17px; flex: none; background: #f7f7f7; background-image: repeating-linear-gradient(to bottom, #aaa 0 1px, transparent 1px 8px); background-size: 1px 100%; background-repeat: no-repeat; background-position: 14px 0; display: flex; flex-direction: column; align-items: flex-start; overflow: hidden; }
.v-ruler span { flex: none; height: 80px; width: 12px; writing-mode: vertical-rl; transform: rotate(180deg); font-family: "Liberation Sans", sans-serif; font-size: 10px; line-height: 12px; color: #999; text-align: center; }
.v-ruler span:first-child { margin-top: -15px; }
.v-ruler em { flex: none; writing-mode: vertical-rl; transform: rotate(180deg); font-style: normal; font-family: "Liberation Sans", sans-serif; font-size: 10px; color: #999; margin-top: 41px; line-height: 12px; }
.canvas-col { flex: 1; min-width: 0; display: flex; flex-direction: column; }
.canvas { flex: 1; min-height: 0; background: #fff; overflow: hidden; padding-left: 107px; }
.page-edge { height: 100%; border-left: 1px solid #c8c8c8; padding-top: 303px; }
.text-frame { margin-left: -1px; width: 1000px; height: 23px; border: 1px dashed #000; border-right: 0; font-family: "Liberation Sans", sans-serif; font-size: 19.95px; line-height: 21px; color: #000; white-space: nowrap; }
.scroll-row { height: 16px; flex: none; display: flex; background: #fff; align-items: stretch; }
.scroll-left { width: 16px; background: #f3f3f3; display: flex; align-items: center; justify-content: center; }
.scroll-left svg { width: 8px; height: 10px; }
.scroll-thumb { width: 800px; margin-left: 350px; background: #cbcbcb; }
.page-row { height: 25px; flex: none; display: flex; align-items: center; border-top: 1px solid #dedede; border-bottom: 1px solid #dedede; background: #f3f3f3; color: #555; }
.pg-plus { width: 24px; font-size: 18px; line-height: 20px; color: #333; text-align: center; flex: none; }
.pg { width: 11px; height: 11px; margin: 0 6px; flex: none; }
.page-row .pg:nth-of-type(1) { margin-left: 5px; }
.pg-count { width: 58px; text-align: center; font-size: 12px; letter-spacing: .4px; color: #555; flex: none; }
.pg-tab { width: 100px; flex: none; align-self: stretch; background: #d8d8d8; text-align: center; font-size: 11.4px; line-height: 24px; color: #333; }
.color-row { height: 21px; flex: none; display: flex; align-items: center; border-bottom: 1px solid #dedede; background: #f3f3f3; }
.dots { width: 6px; height: 16px; margin-left: 2px; background-image: radial-gradient(#aaa 40%, transparent 45%); background-size: 3px 3px; }
.cr-r { width: 6px; height: 10px; margin-left: 7px; }
.cr-pip { width: 15px; height: 15px; margin-left: 8px; }
.cr-l { width: 8px; height: 10px; margin-left: 6px; }
.none-swatch { width: 18px; height: 18px; margin-left: 6px; border: 1px solid #444; background: #fff; display: block; }
.none-swatch svg { display: block; width: 16px; height: 16px; }
.color-hint { margin-left: 468px; font-size: 11.55px; font-style: italic; color: #aaa; white-space: nowrap; }

.palette-col { display: flex; background: #f3f3f3; min-height: 0; overflow: hidden; }
.side-scroll { width: 6px; flex: none; background: #dcdcdc; padding-top: 23px; }
.side-scroll span { display: block; height: 110px; background: #9a9a9a; }
.palette { width: 19px; flex: none; display: flex; flex-direction: column; align-items: flex-start; padding-top: 1px; }
.dots-h { width: 16px; height: 5px; margin-left: 1px; background-image: radial-gradient(#aaa 40%, transparent 45%); background-size: 3px 3px; flex: none; }
.pal-arrow { width: 6px; height: 10px; margin: 7px 0 0 6px; flex: none; }
.pal-pip { width: 14px; height: 14px; margin: 7px 0 0 2px; flex: none; }
.pal-chev { width: 14px; height: 8px; margin: 6px 0 0 2px; flex: none; }
.pal-chev.down { margin-top: 4px; }
.pal-chev.more { height: 10px; margin-top: 10px; }
.swatch { width: 18px; height: 17px; flex: none; border-bottom: 1px solid rgba(0,0,0,.15); }
.sw-none { background: #fff; border: 1px solid #444; margin-top: 8px; }
.sw-none svg { display: block; width: 16px; height: 15px; }
.swatch-end { width: 18px; height: 3px; background: #033; flex: none; }
.s1 { background: #000; } .s2 { background: #111; } .s3 { background: #333; } .s4 { background: #4d4d4d; } .s5 { background: #666; } .s6 { background: #808080; } .s7 { background: #999; } .s8 { background: #b3b3b3; } .s9 { background: #ccc; } .s10 { background: #e5e5e5; } .s11 { background: #fff; } .s12 { background: #00f; } .s13 { background: #0ff; } .s14 { background: #0f0; } .s15 { background: #ff0; } .s16 { background: #f00; } .s17 { background: #f0f; } .s18 { background: #90c; } .s19 { background: #f60; } .s20 { background: #f9c; } .s21 { background: #633; } .s22 { background: #ccf; } .s23 { background: #99f; } .s24 { background: #69f; } .s25 { background: #66f; } .s26 { background: #66c; } .s27 { background: #039; } .s28 { background: #006; } .s29 { background: #369; } .s30 { background: #0cf; } .s31 { background: #9ff; } .s32 { background: #9cc; } .s33 { background: #699; } .s34 { background: #366; }

.statusbar { height: 38px; flex: none; background: #f3f3f3; display: flex; align-items: center; padding-left: 8px; font-size: 11.4px; color: #222; white-space: nowrap; }
.st-gear { width: 22px; height: 22px; flex: none; }
.st-msg { margin-left: 6px; width: 1121px; flex: none; overflow: hidden; }
.st-fill { width: 38px; height: 18px; flex: none; }
.st-none { margin-left: 6px; width: 162px; flex: none; }
.st-small { width: 6px; height: 6px; border: 1px solid #222; flex: none; margin: 13px 0 0 8px; }
.st-black { width: 20px; height: 18px; background: #000; flex: none; margin: 4px 0 0 3px; }
.st-rgb { margin-left: 5px; }

/* Taskbar */
.taskbar { height: 40px; background: #1f3240; display: flex; align-items: stretch; }
.tk-start { width: 48px; display: flex; align-items: center; justify-content: center; }
.tk-start svg { width: 16px; height: 16px; }
.tk-app { width: 49px; display: flex; align-items: center; justify-content: center; }
.tk-app.first { margin-left: 2px; }
.tk-app svg { width: 24px; height: 24px; }
.run { background: linear-gradient(#63aee6, #63aee6) center bottom / 40px 2px no-repeat; }
.active { background: linear-gradient(#63aee6, #63aee6) center bottom / 100% 2px no-repeat, #46596a; }
.tray { margin-left: auto; display: flex; align-items: center; padding-right: 17px; color: #e8eef2; }
.tr { width: 24px; display: flex; align-items: center; justify-content: center; flex: none; }
.t22 { width: 23px; height: 23px; }
.t18 { width: 18px; height: 18px; }
.t16 { width: 16px; height: 16px; }
.qm { font: bold 15px "Liberation Sans", sans-serif; fill: #fff; }
.clock { width: 60px; margin-left: 4px; display: flex; flex-direction: column; align-items: center; font-size: 11.5px; line-height: 17px; flex: none; white-space: nowrap; }
.notif { width: 28px; margin-left: 12px; flex: none; position: relative; height: 30px; }
.notif svg { width: 16px; height: 14px; position: absolute; left: 5px; top: 4px; }
.notif i { position: absolute; left: 13px; top: 13px; width: 19px; height: 16px; border-radius: 8px; border: 1px solid #9aa; background: #2a3c49; font-style: normal; font-size: 11px; line-height: 14px; text-align: center; color: #fff; }

/* Browser window */
.browser { position: absolute; left: 1075px; top: 0; width: 500px; height: 844px; background: #fff; box-shadow: 0 0 14px rgba(0,0,0,.4); display: flex; flex-direction: column; font-family: "Liberation Sans", sans-serif; }
.tabstrip { height: 43px; flex: none; background: #0d396c; display: flex; align-items: flex-end; padding-left: 8px; position: relative; }
.tab { height: 34px; width: 112px; display: flex; align-items: center; padding: 0 10px 0 12px; color: #fff; font-family: "Open Sans", sans-serif; font-size: 12px; flex: none; white-space: nowrap; }
.current { background: #10508f; border-radius: 8px 8px 0 0; }
.other { padding-left: 10px; }
.fav { width: 16px; height: 16px; flex: none; }
.tab-text { margin-left: 9px; flex: 1; overflow: hidden; -webkit-mask-image: linear-gradient(to right, #000 60%, transparent 100%); mask-image: linear-gradient(to right, #000 60%, transparent 100%); color: #dce8f4; }
.tab-x { width: 10px; height: 10px; flex: none; margin-left: 6px; color: #fff; }
.tab-sep { width: 1px; height: 20px; background: #4c7099; margin: 0 0 7px -1px; flex: none; }
.tab-new { width: 14px; height: 14px; margin: 0 0 10px 14px; flex: none; }
.win-ctrl { position: absolute; left: 333px; top: 9px; display: flex; gap: 34px; }
.win-ctrl svg { width: 12px; height: 12px; }
.navbar { height: 36px; flex: none; background: #10508f; display: flex; align-items: center; padding-left: 12px; }
.nv { width: 20px; height: 20px; flex: none; margin-right: 12px; }
.omnibox { flex: none; width: 220px; height: 28px; margin-right: 13px; border-radius: 14px; background: #0d3f73; display: flex; align-items: center; color: #c9d8e8; font-family: "Open Sans", sans-serif; font-size: 13px; white-space: nowrap; padding-left: 10px; }
.om-i { width: 15px; height: 15px; flex: none; }
.om-scheme { margin-left: 8px; color: #9db7d2; font-size: 13.5px; }
.om-sep { width: 1px; height: 16px; background: #6b8fb3; margin: 0 8px; flex: none; }
.om-url { color: #e3ecf5; width: 60px; flex: none; font-size: 13.5px; }
.om-share { width: 16px; height: 14px; margin-left: 5px; flex: none; }
.om-star { width: 16px; height: 16px; margin-left: 15px; fill: none; stroke: #c9d8e8; stroke-width: 1.8; flex: none; }
.ext { width: 16px; height: 16px; margin-right: 15px; }
.panel { width: 14px; height: 13px; margin-left: 2px; margin-right: 15px; }
.avatar { width: 22px; height: 22px; flex: none; margin-right: 19px; }
.avatar svg { display: block; width: 22px; height: 22px; }
.dots3 { width: 4px; height: 14px; margin-right: 0; }
.bookmarks { height: 33px; flex: none; background: #10508f; display: flex; align-items: center; padding: 0 0 5px 14px; color: #fff; }
.bm { flex: none; }
.bm-star { width: 15px; height: 15px; fill: #fff; }
.bm-fold1 { width: 13px; height: 15px; margin-left: 17px; }
.bm-heart { width: 15px; height: 13px; margin-left: 11px; }
.bm-ring1 { width: 17px; height: 17px; margin-left: 16px; }
.bm-w { margin-left: 8px; font: bold 11px "Open Sans", sans-serif; width: 10px; }
.bm-ring2 { width: 17px; height: 17px; margin-left: 15px; }
.bm-tw { width: 17px; height: 15px; margin-left: 15px; }
.bm-wh { width: 17px; height: 17px; margin-left: 16px; }
.bm-gh { width: 17px; height: 17px; margin-left: 15px; }
.bm-cp { width: 17px; height: 17px; margin-left: 15px; }
.bm-more { width: 11px; height: 9px; margin-left: 45px; }
.bm-sep { width: 1px; height: 16px; background: #6b8fb3; margin-left: 8px; flex: none; }
.bm-fold2 { width: 13px; height: 15px; margin-left: 11px; }
.bm-other { font-family: "Open Sans", sans-serif; font-size: 11.2px; margin-left: 10px; white-space: nowrap; color: #eef3f8; }

.site-head { height: 43px; flex: none; background: #f4f4f4; display: flex; align-items: center; padding: 0 15px 0 16px; }
.site-home { width: 26px; height: 22px; flex: none; }
.hola { margin-left: 7px; font-family: "DejaVu Sans", sans-serif; font-size: 24px; letter-spacing: .6px; color: #111; line-height: 30px; margin-bottom: 2px; }
.site-pen { width: 24px; height: 24px; margin-left: auto; flex: none; }

.viewport { height: 650px; flex: none; display: flex; overflow: hidden; }
.content { width: 483px; flex: none; height: 650px; overflow: hidden; border-top: 8px solid #6b46c1; padding: 32px 16px 0; background: linear-gradient(#44337a 176px, #e2e8f0 176px); }
.back { display: block; height: 37px; width: 99px; padding: 0; border: 0; border-radius: 6px; background: #553c9a; color: #9171e6; font-family: inherit; font-size: 14.5px; }
.card { margin-top: 32px; background: #fff; border-radius: 8px 8px 0 0; padding: 24px; height: 600px; }
h1 { margin: 2px 0 14px; font-size: 24px; line-height: 32px; font-weight: 700; color: #2d3748; letter-spacing: .05px; }
.flabel { display: block; font-size: 14px; line-height: 20px; font-weight: 700; color: #2d3748; letter-spacing: .05px; margin-bottom: 5px; }
.flabel small { font-size: 12px; color: #a0aec0; }
.finput { display: block; width: 403px; height: 40px; padding: 0 16px; border: 2px solid #edf2f7; border-radius: 8px; background: #edf2f7; font-family: inherit; font-size: 16px; color: #4a5568; outline: 0; }
.focused { background: #fff; border-color: #5b93b5; }
.focused::placeholder { color: #a0aec0; opacity: 1; }
.mt-color { margin-top: 20px; }
.colors { display: flex; flex-wrap: wrap; column-gap: 24px; row-gap: 15px; margin: 9px 0 0 8px; }
.dot { width: 24px; height: 24px; border-radius: 50%; flex: none; }
.picked { box-shadow: 0 0 0 4px #fff, 0 0 0 6px #cbd5e0; }
.d-blue { background: #3182ce; } .d-green { background: #38a169; } .d-purple { background: #805ad5; } .d-red { background: #e53e3e; } .d-orange { background: #dd6b20; } .d-indigo { background: #5a67d8; } .d-teal { background: #319795; } .d-gray { background: #718096; } .d-yellow { background: #d69e2e; }
.mt-banner { margin-top: 31px; margin-bottom: 4px; }
.focus-wrap { position: relative; }
.text-caret { position: absolute; left: 18px; top: 12px; width: 1px; height: 17px; background: #333; }
.mt-date { margin-top: 20px; margin-bottom: 4px; }
.date-opts { display: flex; gap: 14px; }
.opt { height: 65px; flex: none; background: #edf2f7; border-radius: 8px; display: flex; align-items: center; font-size: 16px; line-height: 24px; color: #4a5568; }
.opt-long { width: 218px; padding: 0 20px 0 16px; }
.opt-short { width: 156px; padding-left: 17px; }
.radio { width: 22px; height: 22px; border-radius: 50%; background: #fff; flex: none; margin-right: 12px; }
.radio.on { background: #fff; border: 6px solid #805ad5; }
.opt-text { flex: 1; }
.actions { display: flex; gap: 12px; margin-top: 32px; }
.btn { height: 42px; border-radius: 8px; font-family: inherit; font-size: 16px; font-weight: 700; padding: 0; }
.cancel { width: 102px; background: #fff; border: 1px solid #e9edf2; color: #4a5568; }
.save { width: 96px; background: #6b46c1; border: 0; color: #fff; }
.scrollbar { width: 17px; flex: none; background: #f3f3f3; display: flex; flex-direction: column; align-items: center; }
.scrollbar svg { width: 10px; height: 6px; margin-top: 5px; flex: none; }
.sb-thumb { width: 13px; height: 593px; margin-top: 4px; background: #bdbdbd; flex: none; }
.scrollbar .sb-down { margin-top: auto; margin-bottom: 7px; }
.window-foot { flex: 1; background: #fff; }
```
